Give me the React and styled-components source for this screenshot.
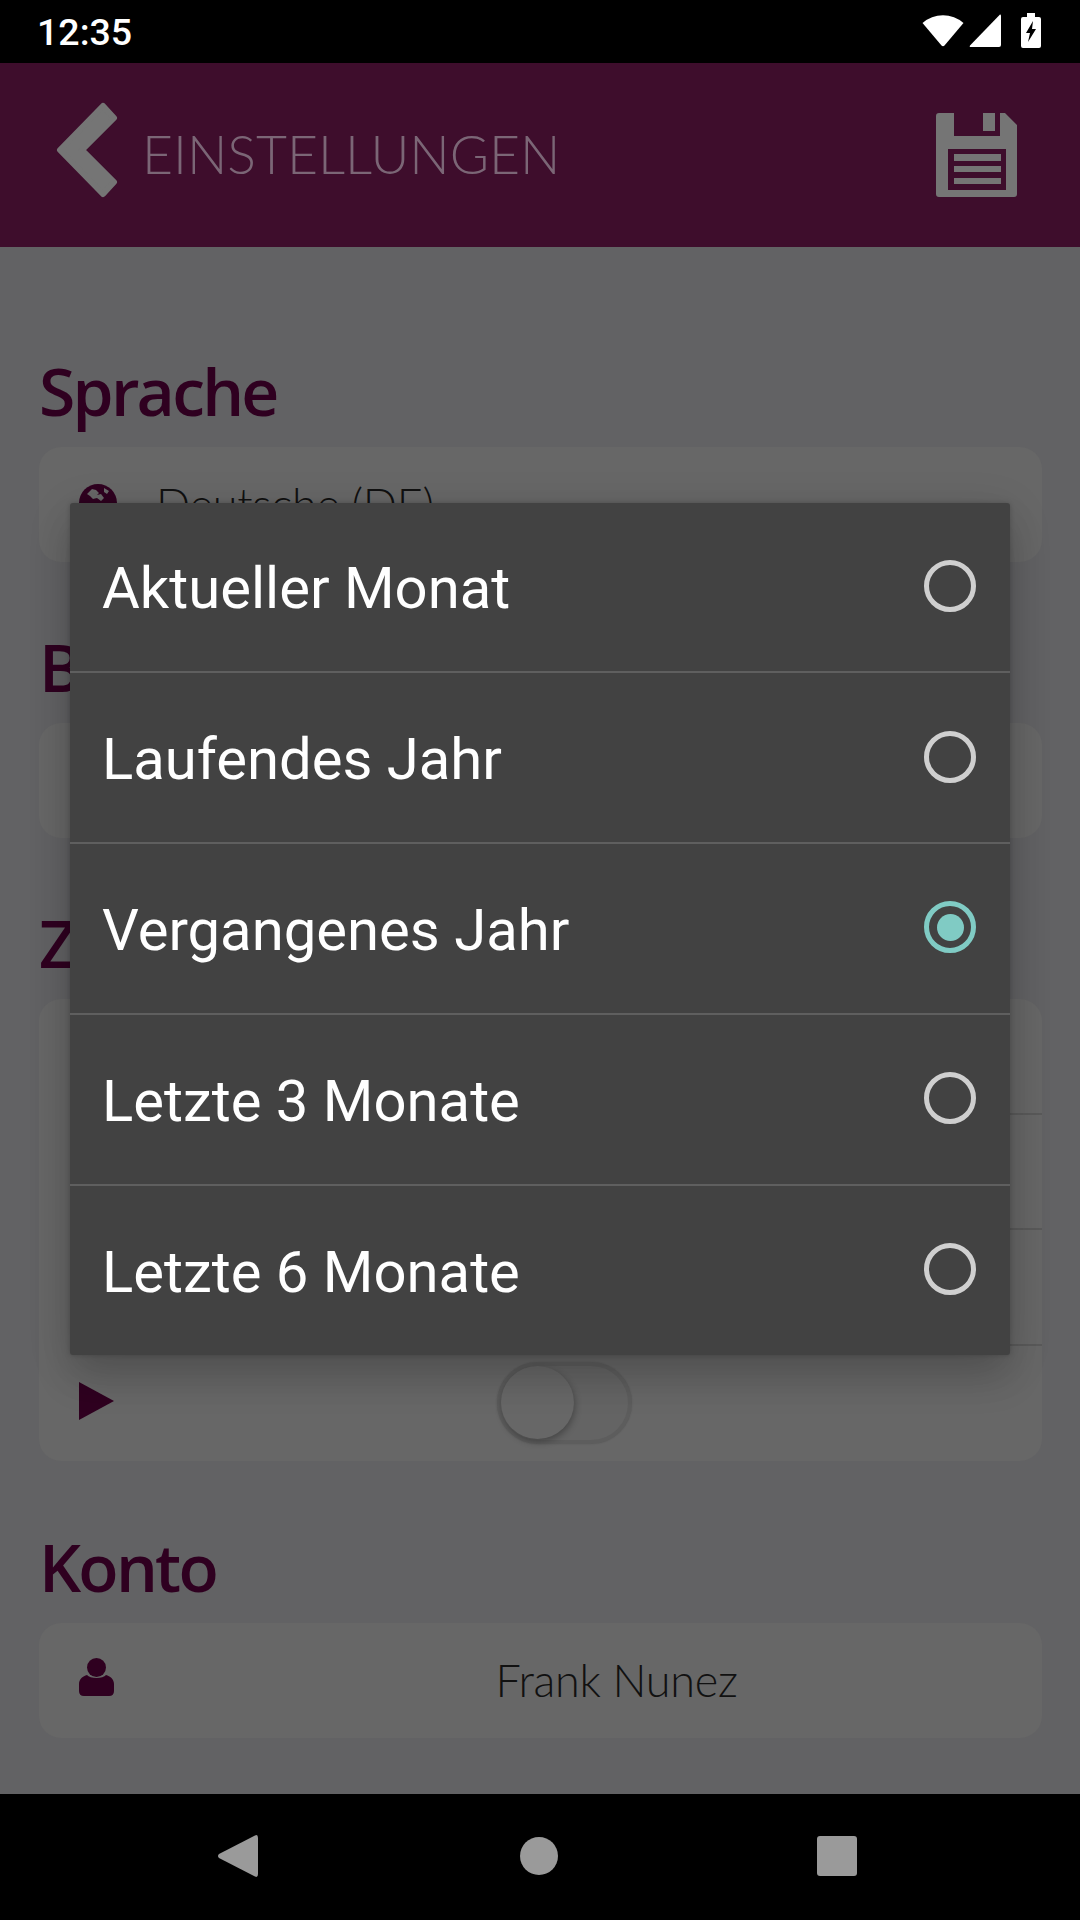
import React from 'react';
import styled, { createGlobalStyle } from 'styled-components';

const options = [
	{ label: 'Aktueller Monat' },
	{ label: 'Laufendes Jahr' },
	{ label: 'Vergangenes Jahr', selected: true },
	{ label: 'Letzte 3 Monate' },
	{ label: 'Letzte 6 Monate' },
];

function App() {
	return (
		<Page>
			<GlobalStyle />
			<StatusBar>
				<Clock>12:35</Clock>
				<StatusIcons>
					<svg width='42' height='32' viewBox='0 0 42 32'>
						<path d='M0.5 8 A31 31 0 0 1 41.5 8 L22.5 30.5 Q21 32 19.5 30.5 Z' fill='#fff' />
					</svg>
					<svg width='32' height='33' viewBox='0 0 32 33'>
						<path d='M31 0.5 Q32 0 32 2 V31 Q32 33 30 33 H2 Q0 33 1 31.5 Z' fill='#fff' />
					</svg>
					<BatteryIcon width='20' height='35' viewBox='0 0 20 35'>
						<path d='M6 0 H14 V4 H18 Q20 4 20 6 V33 Q20 35 18 35 H2 Q0 35 0 33 V6 Q0 4 2 4 H6 Z' fill='#fff' />
						<path d='M12 8 L5 20 H9 L7 29 L15 16 H11 Z' fill='#000' />
					</BatteryIcon>
				</StatusIcons>
			</StatusBar>
			<Header>
				<HeaderLeft>
					<BackIcon width='62' height='96' viewBox='0 0 62 96'>
						<path
							d='M4 48 L47 4 L58 16 L26 48 L58 80 L47 92 Z'
							fill='#757575'
							stroke='#757575'
							strokeWidth='6'
							strokeLinejoin='round'
						/>
					</BackIcon>
					<Title>EINSTELLUNGEN</Title>
				</HeaderLeft>
				<svg width='82' height='84' viewBox='0 0 82 84'>
					<path
						fillRule='evenodd'
						d='M3 0 H18 V23 H64 V0 H69 L81 12 V81 A3 3 0 0 1 78 84 H3 A3 3 0 0 1 0 81 V3 A3 3 0 0 1 3 0 Z M12 36 V77 H70 V36 Z'
						fill='#757575'
					/>
					<path d='M47 0 H59 V18 H47 Z M18 41 H65 V48 H18 Z M18 53 H65 V59 H18 Z M18 65 H65 V71 H18 Z' fill='#757575' />
				</svg>
			</Header>
			<Content>
				<Section>
					<Heading>Sprache</Heading>
					<Card>
						<Row>
							<IconCell $lift={4}>
								<svg width='38' height='38' viewBox='0 0 38 38'>
									<circle cx='19' cy='19' r='19' fill='#2f0020' />
									<path
										d='M8 10 L13 5 L17 6 L20 9 L18 11 L22 10 L25 14 L22 17 L18 14 L14 15 L11 12 Z M25 4 L30 7 L28 10 L25 8 Z'
										fill='#676767'
									/>
								</svg>
							</IconCell>
							<Value $align='left'>Deutsche (DE)</Value>
						</Row>
					</Card>
				</Section>
				<Section>
					<Heading>B</Heading>
					<Card>
						<Row />
					</Card>
				</Section>
				<Section>
					<Heading>Z</Heading>
					<Card>
						<Row $short>
							<IconCell />
							<DividedCell />
						</Row>
						<Row $short>
							<IconCell />
							<DividedCell />
						</Row>
						<Row $short>
							<IconCell />
							<DividedCell />
						</Row>
						<Row $short>
							<IconCell $lift={4}>
								<svg width='35' height='38' viewBox='0 0 35 38'>
									<path d='M0 0 L35 19 L0 38 Z' fill='#2f0020' />
								</svg>
							</IconCell>
							<ToggleCell>
								<Toggle>
									<Knob />
								</Toggle>
							</ToggleCell>
						</Row>
					</Card>
				</Section>
				<Section>
					<Heading>Konto</Heading>
					<Card>
						<Row>
							<IconCell $lift={8}>
								<svg width='35' height='38' viewBox='0 0 35 38'>
									<circle cx='17.5' cy='9.5' r='9.5' fill='#2f0020' />
									<path
										d='M0 33 V26 C0 21 4 18 8 17 C11 21 24 21 27 17 C31 18 35 21 35 26 V33 Q35 38 30 38 H5 Q0 38 0 33 Z'
										fill='#2f0020'
									/>
								</svg>
							</IconCell>
							<Value>Frank Nunez</Value>
						</Row>
					</Card>
				</Section>
			</Content>
			<NavBar>
				<svg width='40' height='42' viewBox='0 0 40 42'>
					<path d='M37 0.5 Q40 -1 40 3 V39 Q40 43 37 41.5 L1 23 Q-1 21 1 19 Z' fill='#9a9a9a' />
				</svg>
				<NavCircle />
				<NavSquare />
			</NavBar>
			<DialogLayer>
				<Dialog>
					{options.map((option) => (
						<Option key={option.label}>
							<OptionLabel>{option.label}</OptionLabel>
							<Radio $selected={option.selected} />
						</Option>
					))}
				</Dialog>
			</DialogLayer>
		</Page>
	);
}

const GlobalStyle = createGlobalStyle`
	html, body {
		margin: 0;
		padding: 0;
		background: #626264;
	}
	* {
		box-sizing: border-box;
	}
`;

const Page = styled.div`
	position: relative;
	display: flex;
	flex-direction: column;
	width: 1080px;
	height: 1920px;
	overflow: hidden;
	background: #626264;
`;
const StatusBar = styled.div`
	flex: none;
	display: flex;
	justify-content: space-between;
	align-items: center;
	height: 63px;
	padding: 0 39px 0 37px;
	background: #000;
`;
const Clock = styled.span`
	font-family: Roboto, sans-serif;
	font-size: 37.5px;
	font-weight: 500;
	color: #fff;
`;
const StatusIcons = styled.div`
	display: flex;
	align-items: center;
	gap: 5px;
	padding-bottom: 2px;
`;
const BatteryIcon = styled.svg`
	margin-left: 15px;
`;
const Header = styled.header`
	flex: none;
	display: flex;
	justify-content: space-between;
	align-items: center;
	height: 184px;
	padding: 0 62px 0 56px;
	background: #3e0d2c;
`;
const HeaderLeft = styled.div`
	display: flex;
	align-items: center;
	gap: 24px;
`;
const BackIcon = styled.svg`
	margin-bottom: 10px;
`;
const Title = styled.h1`
	margin: 0 0 4px;
	font-family: Lato, sans-serif;
	font-size: 53.5px;
	font-weight: 300;
	color: #7b6676;
`;
const Content = styled.main`
	flex: 1;
	min-height: 0;
	padding: 116px 38px 0 37px;
`;
const Section = styled.section`
	margin-bottom: 77px;
	&:nth-child(3) {
		margin-bottom: 78px;
	}
`;
const Heading = styled.h2`
	margin: 0 0 30px 2px;
	font-family: 'Open Sans', sans-serif;
	font-size: 66px;
	line-height: 54px;
	font-weight: 600;
	letter-spacing: -2.75px;
	color: #2f0020;
`;
const Card = styled.div`
	margin-left: 2px;
	border-radius: 22px;
	background: #676767;
`;
const Row = styled.div`
	display: flex;
	height: ${(props) => (props.$short ? '115.5px' : '115px')};
`;
const IconCell = styled.div`
	display: flex;
	justify-content: flex-start;
	align-items: center;
	flex: 0 0 152px;
	padding-left: 40px;
	padding-bottom: ${(props) => props.$lift || 0}px;
`;
const DividedCell = styled.div`
	flex: 1;
	border-bottom: 2px solid #5a5a5a;
`;
const Value = styled.div`
	flex: 1;
	display: flex;
	align-items: center;
	justify-content: ${(props) => (props.$align === 'left' ? 'flex-start' : 'center')};
	margin-left: ${(props) => (props.$align === 'left' ? '-35px' : '0')};
	padding-bottom: 2px;
	font-family: Lato, sans-serif;
	font-size: 45px;
	font-weight: 300;
	letter-spacing: -0.3px;
	color: #111;
`;
const ToggleCell = styled.div`
	flex: 1;
	display: flex;
	align-items: center;
	padding-left: 306px;
`;
const Toggle = styled.div`
	position: relative;
	width: 135px;
	height: 82px;
	border: 4px solid #5d5d5d;
	border-radius: 41px;
	background: #646464;
	box-shadow: 0 0 2px rgba(0, 0, 0, 0.12);
`;
const Knob = styled.div`
	position: absolute;
	top: 0;
	left: 0;
	width: 73px;
	height: 73px;
	border-radius: 50%;
	background: #676767;
	box-shadow: 1px 3px 7px rgba(0, 0, 0, 0.3);
`;
const NavBar = styled.nav`
	flex: none;
	display: flex;
	justify-content: center;
	align-items: center;
	gap: 262px;
	height: 126px;
	padding: 0 6px 2px 0;
	background: #000;
`;
const NavCircle = styled.div`
	width: 38px;
	height: 38px;
	border-radius: 50%;
	background: #9a9a9a;
`;
const NavSquare = styled.div`
	width: 40px;
	height: 40px;
	margin-left: -3px;
	border-radius: 3px;
	background: #9a9a9a;
`;
const DialogLayer = styled.div`
	position: absolute;
	top: 63px;
	left: 0;
	right: 0;
	bottom: 126px;
	display: flex;
	justify-content: center;
	align-items: center;
`;
const Dialog = styled.div`
	width: 940px;
	height: 852px;
	display: flex;
	flex-direction: column;
	border-radius: 3px;
	background: #424242;
	box-shadow: 0 24px 38px rgba(0, 0, 0, 0.14), 0 9px 46px rgba(0, 0, 0, 0.12), 0 0 5px rgba(0, 0, 0, 0.2);
`;
const Option = styled.div`
	flex: 1;
	display: flex;
	justify-content: space-between;
	align-items: center;
	padding: 0 34px 0 32px;
	border-bottom: 2px solid #5f5f5f;
	&:last-child {
		border-bottom: none;
	}
`;
const OptionLabel = styled.span`
	padding-top: 3px;
	font-family: Roboto, sans-serif;
	font-size: 58px;
	color: #fff;
`;
const Radio = styled.span`
	display: flex;
	justify-content: center;
	align-items: center;
	width: 52px;
	height: 52px;
	margin-bottom: 2px;
	border: 5px solid ${(props) => (props.$selected ? '#80cbc4' : '#cfcfcf')};
	border-radius: 50%;
	&::after {
		content: '';
		display: ${(props) => (props.$selected ? 'block' : 'none')};
		width: 27px;
		height: 27px;
		border-radius: 50%;
		background: #80cbc4;
	}
`;

export default App;
